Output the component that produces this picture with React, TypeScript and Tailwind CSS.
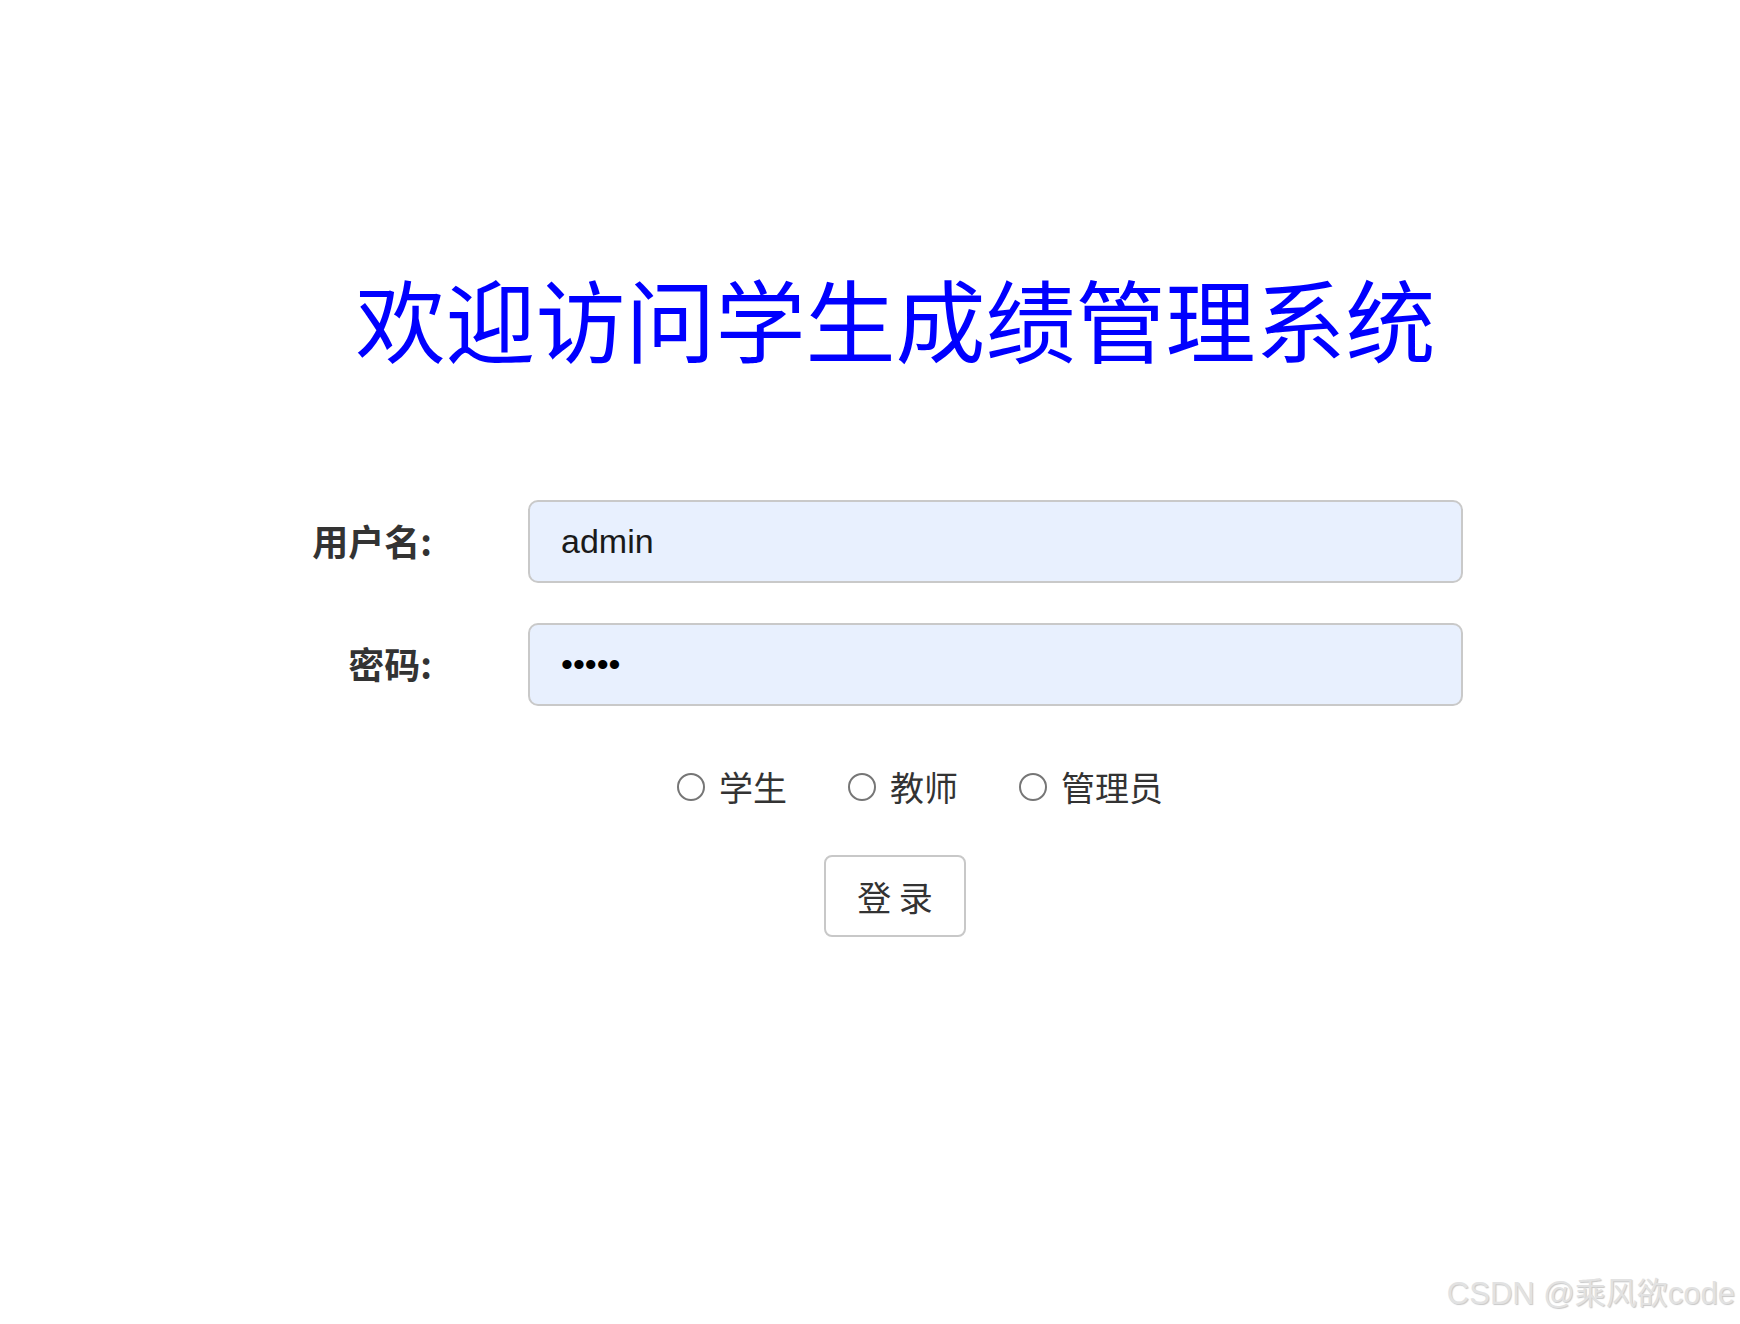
import { useState } from 'react';

const roles = ['学生', '教师', '管理员'];

export default function App() {
  const [username, setUsername] = useState('admin');
  const [password, setPassword] = useState('admin');
  const [role, setRole] = useState<string | null>(null);

  return (
    <div
      className="relative min-h-screen bg-white"
      style={{ fontFamily: '"Noto Sans CJK SC", "Liberation Sans", sans-serif' }}
    >
      {/* Title */}
      <div className="flex justify-center pl-[51px] pt-[272px]">
        <h1 className="text-[90px] leading-none font-normal text-[#0000ff] whitespace-nowrap">
          欢迎访问学生成绩管理系统
        </h1>
      </div>

      {/* Form */}
      <div className="mt-[138px] ml-[232px] grid grid-cols-[200px_935px] gap-x-[96px] gap-y-[40px] items-center">
        <label className="text-right text-[36px] font-bold text-[#333] -mt-[3px]">用户名:</label>
        <input
          type="text"
          value={username}
          onChange={e => setUsername(e.target.value)}
          className="h-[83px] w-[935px] rounded-[10px] border-2 border-[#c9c9c9] bg-[#e8f0fe] pl-[31px] text-[34px] text-[#1a1a1a] outline-none font-['Liberation_Sans',sans-serif]"
        />
        <label className="text-right text-[36px] font-bold text-[#333] -mt-[3px]">密码:</label>
        <input
          type="password"
          value={password}
          onChange={e => setPassword(e.target.value)}
          className="h-[83px] w-[935px] rounded-[10px] border-2 border-[#c9c9c9] bg-[#e8f0fe] pl-[31px] text-[34px] text-black outline-none font-['Liberation_Sans',sans-serif]"
        />
      </div>

      {/* Roles */}
      <div className="mt-[64px] flex justify-center items-start gap-[61px] pl-[100px]">
        {roles.map(r => (
          <label key={r} className="flex items-start gap-[14px] cursor-pointer" onClick={() => setRole(r)}>
            <span className="mt-[3px] flex h-[28px] w-[28px] items-center justify-center rounded-full border-2 border-[#767676] bg-white">
              {role === r && <span className="h-[14px] w-[14px] rounded-full bg-[#0075ff]" />}
            </span>
            <span className="text-[34px] leading-none text-[#333]">{r}</span>
          </label>
        ))}
      </div>

      {/* Submit */}
      <div className="mt-[51px] flex justify-center pl-[50px]">
        <button className="h-[82px] w-[142px] rounded-[8px] border-2 border-[#c8c8c8] bg-white text-[34px] text-[#333]">
          登 录
        </button>
      </div>

      {/* Watermark */}
      <div className="absolute bottom-[15px] right-[5px] text-[31px] leading-none text-[#e2e2e2] [text-shadow:1px_1px_1px_rgba(0,0,0,0.22)] font-['Liberation_Sans','Noto_Sans_CJK_SC',sans-serif]">
        CSDN @乘风欲code
      </div>
    </div>
  );
}
